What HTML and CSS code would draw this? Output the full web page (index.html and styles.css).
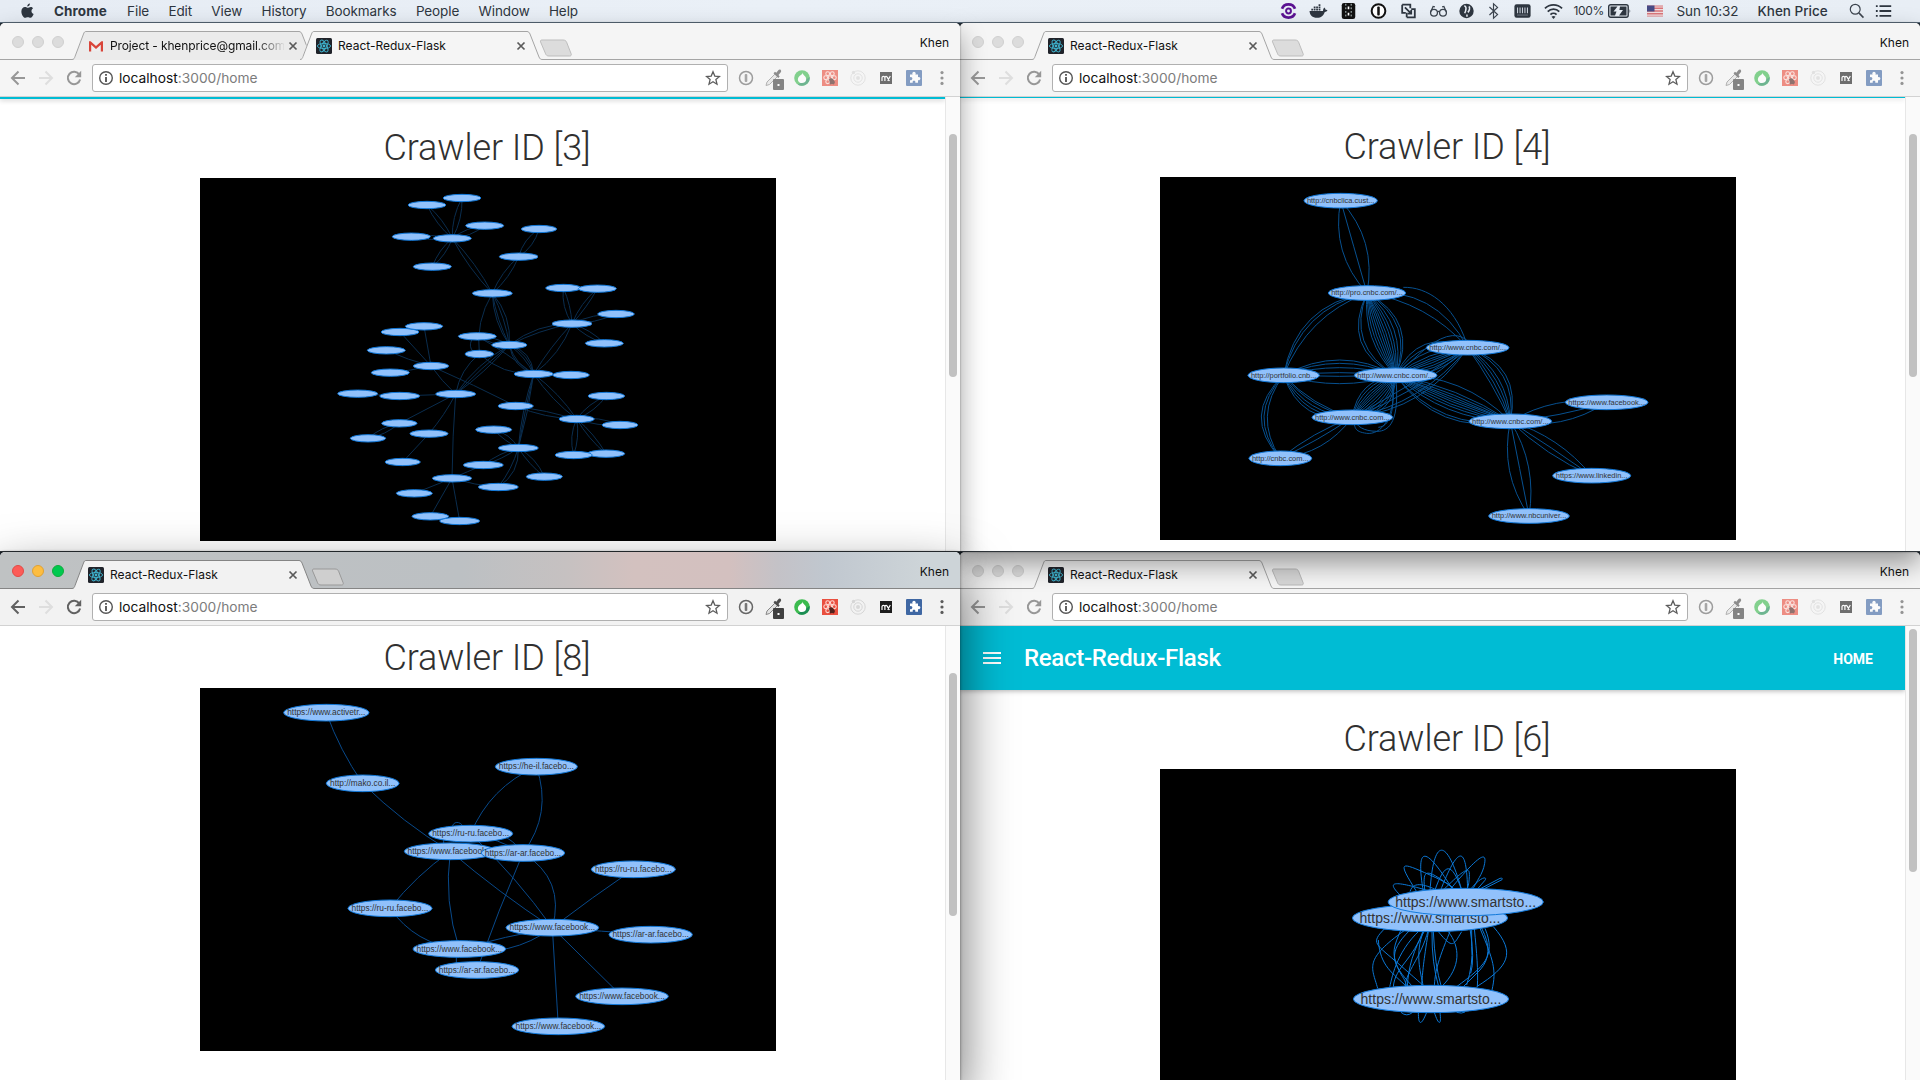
FILE: index.html
```html
<!DOCTYPE html>
<html lang="en">
<head>
<meta charset="utf-8">
<title>React-Redux-Flask</title>
<link rel="stylesheet" href="styles.css">
</head>
<body>
<svg class="sprite" aria-hidden="true">
  <symbol id="react" viewBox="0 0 16 16"><rect width="16" height="16" rx="1.5" fill="#20232a"/><g fill="none" stroke="#3fb4cf" stroke-width=".9"><ellipse cx="8" cy="8" rx="6.6" ry="2.6"/><ellipse cx="8" cy="8" rx="6.6" ry="2.6" transform="rotate(60 8 8)"/><ellipse cx="8" cy="8" rx="6.6" ry="2.6" transform="rotate(120 8 8)"/></g><circle cx="8" cy="8" r="1.4" fill="#3fb4cf"/></symbol>
  <symbol id="gmail" viewBox="0 0 16 16"><path d="M2 3h12v10H2z" fill="#eee"/><path d="M1 13.5V3.2h1.6L8 8l5.400-4.800H15v10.300h-2.200V6.800L8 10.900 3.200 6.800v6.700z" fill="#d9453a"/></symbol>
  <symbol id="close" viewBox="0 0 10 10"><path d="M1.500 1.500l7 7M8.500 1.500l-7 7" stroke="#5a5a5a" stroke-width="1.700"/></symbol>
  <symbol id="back" viewBox="0 0 16 16"><path d="M15 8H2M8.500 1.500L2 8l6.500 6.500" fill="none" stroke="currentColor" stroke-width="2"/></symbol>
  <symbol id="forward" viewBox="0 0 16 16"><path d="M1 8h13M7.500 1.500L14 8l-6.500 6.500" fill="none" stroke="currentColor" stroke-width="2"/></symbol>
  <symbol id="reload" viewBox="0 0 16 16"><path d="M13.300 4.600A6.200 6.200 0 1 0 14.100 9.500" fill="none" stroke="currentColor" stroke-width="2"/><path d="M15.200.8v6.400H8.800z" fill="currentColor"/></symbol>
  <symbol id="info" viewBox="0 0 16 16"><circle cx="8" cy="8" r="6.300" fill="none" stroke="#555" stroke-width="1.400"/><path d="M8 7v5M8 4v1.700" stroke="#444" stroke-width="1.700"/></symbol>
  <symbol id="star" viewBox="0 0 16 16"><path d="M8 1.800l1.800 4.300 4.700.4-3.600 3.100 1.100 4.600L8 11.800l-4 2.400 1.100-4.600L1.500 6.500l4.700-.4z" fill="none" stroke="#5c5c5c" stroke-width="1.300"/></symbol>
  <symbol id="onepass" viewBox="0 0 16 16"><circle cx="8" cy="8" r="6.500" fill="none" stroke="#666" stroke-width="1.500"/><rect x="6.700" y="4" width="2.600" height="8" rx="1" fill="#777"/></symbol>
  <symbol id="dropper" viewBox="0 0 20 23"><path d="M2 18.500l1-3.500 8-8 2.500 2.500-8 8z" fill="#e2e2e2" stroke="#888" stroke-width="1"/><path d="M9.500 6.200L11 4.700l1.300 1.100 2-2.600c1.500-2 4 .2 2.300 2.200L14.500 8l1.200 1.500-1.500 1.400z" fill="#4d4d4d"/><rect x="9" y="12" width="11" height="11" rx="1" fill="#404040"/><rect x="13.500" y="17" width="2" height="2" fill="#fff"/></symbol>
  <symbol id="flame" viewBox="0 0 16 16"><circle cx="8" cy="8" r="7.800" fill="#3cbb4f"/><path d="M15.600 7a7.800 7.800 0 0 1-12 7.400l5-2.400z" fill="#1c8d55"/><path d="M9 2.400c-.7 1.700.9 2.600 2.200 4 1.700 2 1.400 6.400-3.200 6.600-3.800.1-5-3.400-3.500-5.800C5.600 5.400 8.300 4.600 9 2.400z" fill="#fff"/></symbol>
  <symbol id="reactext" viewBox="0 0 16 16"><rect width="16" height="16" fill="#e94f3f"/><g fill="none" stroke="#ffd9d3" stroke-width="1.100"><circle cx="5.700" cy="3.700" r="1.900"/><circle cx="10.300" cy="3.700" r="1.900"/><circle cx="3.700" cy="7.700" r="1.900"/><circle cx="12.300" cy="7.700" r="1.900"/><circle cx="5.700" cy="11.700" r="1.900"/><circle cx="8" cy="7.500" r="1.700"/></g><path d="M7 9l2-1 2 1 2 3-1 2.500-2-.5-2 .5z" fill="#51231d"/></symbol>
  <symbol id="orbit" viewBox="0 0 16 16"><g fill="none" stroke="#d6d6d6"><circle cx="8" cy="8" r="7.200"/><circle cx="8" cy="8" r="4.200"/></g><circle cx="8" cy="8" r="2" fill="#d8d8d8"/><circle cx="3.500" cy="2.500" r="1.700" fill="#d6d6d6"/></symbol>
  <symbol id="nx" viewBox="0 0 16 16"><rect x="2" y="2" width="12" height="12" fill="#1d1d1d"/><path d="M4 11V7.800c0-1.900 2.900-1.900 2.900 0V11M6.900 7.600c.2-1.700 2-1.700 2.400-.2L11.400 11M12.300 6L9.700 10.800" fill="none" stroke="#fff" stroke-width="1.200"/></symbol>
  <symbol id="puzzle" viewBox="0 0 16 16"><rect width="16" height="16" rx="1" fill="#3f67a3"/><path d="M4 4.600h2.600a1.700 1.700 0 1 1 2.800 0H12V7.200a1.600 1.600 0 1 1 0 2.800v2.700H9.200a1.400 1.400 0 1 0-2.400 0H4V10a1.600 1.600 0 1 0 0-2.800z" fill="#fff"/></symbol>
  <symbol id="dots" viewBox="0 0 16 16"><g fill="#5a5a5a"><circle cx="8" cy="2.600" r="1.600"/><circle cx="8" cy="8" r="1.600"/><circle cx="8" cy="13.400" r="1.600"/></g></symbol>
  <symbol id="extensions" viewBox="0 0 212 24">
    <use href="#onepass" x="0" y="4" width="16" height="16"/>
    <use href="#dropper" x="26" y="1" width="20" height="23"/>
    <use href="#flame" x="56" y="4" width="16" height="16"/>
    <use href="#reactext" x="84" y="4" width="16" height="16"/>
    <use href="#orbit" x="112" y="4" width="16" height="16"/>
    <use href="#nx" x="140" y="4" width="16" height="16"/>
    <use href="#puzzle" x="168" y="4" width="16" height="16"/>
    <use href="#dots" x="196" y="4" width="16" height="16"/>
  </symbol>
  <symbol id="tab" viewBox="0 0 243 29"><path d="M0 28.500C2 28.500 2.500 27 3 25.500L11.500 3C12.200 1 12.800.5 14 .5H227C228.500.5 229.300 1.500 230 3L239 26C240 28 240.500 28.500 243 28.500V29H0Z" fill="var(--tab)"/><path d="M0 28.500C2 28.500 2.500 27 3 25.500L11.500 3C12.200 1 12.800.5 14 .5H227C228.500.5 229.300 1.500 230 3L239 26C240 28 240.500 28.500 243 28.500" fill="none" stroke="var(--line)"/></symbol>
  <symbol id="newtab" viewBox="0 0 34 18"><path d="M3 1H24c2 0 3 .8 3.600 2.200l4.500 11.500c.5 1.400 0 2.300-1.500 2.300H10c-2 0-2.800-.8-3.400-2.200L1.600 3C1.200 1.800 1.500 1 3 1z" fill="var(--newtab)" stroke="var(--newline)"/></symbol>
</svg>

<header class="menubar">
  <svg class="apple" viewBox="0 0 14 17"><path d="M9.600.3c.1 1.700-1.300 3.300-2.900 3.300C6.500 2 8 .5 9.600.3zM12.900 5.700c-2.400 1.500-2 4.800.7 5.900-.6 1.800-2 4.200-3.400 4.200-1.100 0-1.600-.7-2.900-.7s-1.900.7-2.900.7C2.500 15.800.4 12 .4 9 .4 6 2.300 4.300 4.200 4.300c1.200 0 2.200.8 3 .8s1.900-.9 3.400-.9c.9 0 1.800.5 2.300 1.500z"/></svg>
  <nav class="menus"><b>Chrome</b><span>File</span><span>Edit</span><span>View</span><span>History</span><span>Bookmarks</span><span>People</span><span>Window</span><span>Help</span></nav>
  <div class="status">
    <svg viewBox="0 0 20 20"><g fill="none" stroke="#5b1292" stroke-width="3"><path d="M2.800 7.500a7.600 7 0 0 1 14.400 0M2.800 12.500a7.600 7 0 0 0 14.400 0"/></g><circle cx="10" cy="10" r="2.700" fill="none" stroke="#5b1292" stroke-width="2.200"/></svg>
    <svg viewBox="0 0 20 20"><path d="M0 10h15c0-2 .5-3 1.500-4 1 1 1.300 1.700 1.300 2.600L20 9c-.5 1.500-1.500 2-3 2-1.500 4-4 6.500-8.500 6.500C3 17.500.5 15 0 10z"/><path d="M2 7.500h2v2H2zM4.700 7.500h2v2h-2zM7.400 7.500h2v2h-2zM10.100 7.500h2v2h-2zM4.700 5h2v2h-2zM7.400 5h2v2h-2zM10.100 5h2v2h-2zM10.100 2.500h2v2h-2z"/></svg>
    <svg viewBox="0 0 20 20"><rect x="2.500" y="1" width="15" height="18" rx="2.500" fill="#111"/><path d="M7 2v16M13 2v16" stroke="#cdd" stroke-width="1" stroke-dasharray="2 2"/><path d="M10 5v10" stroke="#fff" stroke-width="1.800" stroke-dasharray="3 4"/></svg>
    <svg viewBox="0 0 20 20"><circle cx="10" cy="10" r="7.600" fill="#fff" stroke="#111" stroke-width="2.200"/><rect x="8.600" y="5" width="2.800" height="10" rx="1" fill="#111"/></svg>
    <svg viewBox="0 0 20 20"><g fill="none" stroke="#2e3640" stroke-width="2"><path d="M3 3h9v4M3 3v9h4"/><path d="M8 17h9V8h-4M8 17v-5"/><path d="M6 6l7 7M13 9v4H9"/></g></svg>
    <svg viewBox="0 0 20 20"><g fill="none" stroke="#3c444e" stroke-width="1.400"><circle cx="5" cy="12" r="3.800"/><circle cx="15" cy="12" r="3.800"/><path d="M8.600 11q1.400-1.200 2.800 0M1.300 11L4 5l2 .5M18.700 11L16 5l-2 .5"/></g></svg>
    <svg viewBox="0 0 20 20"><circle cx="10" cy="10" r="8"/><path d="M7.500 4.500c3 0 2 5 .5 8M12.500 5c2 1 .5 5-1 6.500M10.500 14v2.500" stroke="#e9eef5" stroke-width="1.700" fill="none"/></svg>
    <svg viewBox="0 0 20 20"><path d="M5.500 5.500l9 8.500-4.500 4V2l4.500 4-9 8.500" fill="none" stroke="#3c444e" stroke-width="1.300"/></svg>
    <svg viewBox="0 0 20 20"><rect x="1" y="2.500" width="18" height="15" rx="2.500"/><path d="M4.500 6v6.500M7.300 6v6.500M10 6v6.500M12.700 6v6.500M15.500 6v6.500" stroke="#c9d0da" stroke-width="1.200"/><path d="M4 14.500h12" stroke="#8c949e" stroke-width=".8"/></svg>
    <svg viewBox="0 0 20 20"><g fill="none" stroke="#2e3640" stroke-width="2"><path d="M.5 7a13.500 13.500 0 0 1 19 0M3.600 10.700a9 9 0 0 1 12.800 0M6.600 14a5 5 0 0 1 6.800 0"/></g><path d="M10 19l-2.200-2.500a3.200 3.200 0 0 1 4.400 0z"/></svg>
    <span class="percent">100%</span>
    <svg viewBox="0 0 24 14"><rect x=".7" y=".7" width="19.500" height="12.600" rx="2" fill="none" stroke="#2e3640" stroke-width="1.400"/><path d="M2.500 2.500h7l-4 5h3l-1.500 4h-4.500zM12 2.500h6.500v9H11l4-5.500h-3.600z"/><path d="M21.600 5v4.500q1.500-2 0-4.500z"/></svg>
    <svg class="flag" viewBox="0 0 16 11"><path fill="#d9767a" d="M0 0h16v11H0z"/><path d="M0 1.500h16M0 4.200h16M0 6.900h16M0 9.600h16" stroke="#f1dddf" stroke-width="1.200"/><path fill="#474b86" d="M0 0h7.500v6H0z"/></svg>
    <span class="clock">Sun 10:32</span>
    <span class="user">Khen Price</span>
    <svg viewBox="0 0 20 20"><circle cx="8.500" cy="8.500" r="5.800" fill="none" stroke="#3c444e" stroke-width="1.400"/><path d="M12.800 12.800l5.400 5.600" stroke="#3c444e" stroke-width="1.800"/></svg>
    <svg viewBox="0 0 20 20"><path d="M5 4.500h13M5 10h13M5 15.500h13" stroke="#2e3640" stroke-width="2"/><path d="M1 4.500h2M1 10h2M1 15.500h2" stroke="#2e3640" stroke-width="2"/></svg>
  </div>
</header>

<main class="desktop">
  <section class="window w1">
    <div class="titlebar">
      <div class="lights"><i></i><i></i><i></i></div>
      <div class="tabs">
        <div class="tab inactive"><svg class="shape"><use href="#tab"/></svg><svg class="favicon"><use href="#gmail"/></svg><span class="label fade">Project - khenprice@gmail.com</span><svg class="close"><use href="#close"/></svg></div>
        <div class="tab"><svg class="shape"><use href="#tab"/></svg><svg class="favicon"><use href="#react"/></svg><span class="label">React-Redux-Flask</span><svg class="close"><use href="#close"/></svg></div>
        <svg class="newtab"><use href="#newtab"/></svg>
      </div>
      <span class="profile">Khen</span>
    </div>
    <div class="toolbar"><svg class="nav"><use href="#back"/></svg><svg class="nav off"><use href="#forward"/></svg><svg class="nav"><use href="#reload"/></svg>
      <div class="omnibox"><svg><use href="#info"/></svg><span class="url">localhost<em>:3000/home</em></span><svg><use href="#star"/></svg></div>
      <svg class="extensions"><use href="#extensions"/></svg></div>
    <div class="viewport">
      <article class="page"><div class="appbar strip"></div><h1>Crawler ID [3]</h1><svg class="graph" id="graph3" viewBox="-360 24 1728 1089"></svg></article>
      <div class="scrollbar"><div class="thumb"></div></div>
    </div>
  </section>

  <section class="window w2">
    <div class="titlebar">
      <div class="lights"><i></i><i></i><i></i></div>
      <div class="tabs">
        <div class="tab"><svg class="shape"><use href="#tab"/></svg><svg class="favicon"><use href="#react"/></svg><span class="label">React-Redux-Flask</span><svg class="close"><use href="#close"/></svg></div>
        <svg class="newtab"><use href="#newtab"/></svg>
      </div>
      <span class="profile">Khen</span>
    </div>
    <div class="toolbar"><svg class="nav"><use href="#back"/></svg><svg class="nav off"><use href="#forward"/></svg><svg class="nav"><use href="#reload"/></svg>
      <div class="omnibox"><svg><use href="#info"/></svg><span class="url">localhost<em>:3000/home</em></span><svg><use href="#star"/></svg></div>
      <svg class="extensions"><use href="#extensions"/></svg></div>
    <div class="viewport">
      <article class="page"><div class="appbar strip thin"></div><h1>Crawler ID [4]</h1><svg class="graph" id="graph4" viewBox="-180 21 1728 1089"></svg></article>
      <div class="scrollbar"><div class="thumb"></div></div>
    </div>
  </section>

  <section class="window active w3">
    <div class="titlebar">
      <div class="lights"><i></i><i></i><i></i></div>
      <div class="tabs">
        <div class="tab"><svg class="shape"><use href="#tab"/></svg><svg class="favicon"><use href="#react"/></svg><span class="label">React-Redux-Flask</span><svg class="close"><use href="#close"/></svg></div>
        <svg class="newtab"><use href="#newtab"/></svg>
      </div>
      <span class="profile">Khen</span>
    </div>
    <div class="toolbar"><svg class="nav"><use href="#back"/></svg><svg class="nav off"><use href="#forward"/></svg><svg class="nav"><use href="#reload"/></svg>
      <div class="omnibox"><svg><use href="#info"/></svg><span class="url">localhost<em>:3000/home</em></span><svg><use href="#star"/></svg></div>
      <svg class="extensions"><use href="#extensions"/></svg></div>
    <div class="viewport">
      <article class="page"><h1>Crawler ID [8]</h1><svg class="graph" id="graph8" viewBox="-210 24 1728 1089"></svg></article>
      <div class="scrollbar"><div class="thumb"></div></div>
    </div>
  </section>

  <section class="window w4">
    <div class="titlebar">
      <div class="lights"><i></i><i></i><i></i></div>
      <div class="tabs">
        <div class="tab"><svg class="shape"><use href="#tab"/></svg><svg class="favicon"><use href="#react"/></svg><span class="label">React-Redux-Flask</span><svg class="close"><use href="#close"/></svg></div>
        <svg class="newtab"><use href="#newtab"/></svg>
      </div>
      <span class="profile">Khen</span>
    </div>
    <div class="toolbar"><svg class="nav"><use href="#back"/></svg><svg class="nav off"><use href="#forward"/></svg><svg class="nav"><use href="#reload"/></svg>
      <div class="omnibox"><svg><use href="#info"/></svg><span class="url">localhost<em>:3000/home</em></span><svg><use href="#star"/></svg></div>
      <svg class="extensions"><use href="#extensions"/></svg></div>
    <div class="viewport">
      <article class="page">
        <div class="appbar"><svg class="burger" viewBox="0 0 18 12"><path d="M0 1h18M0 6h18M0 11h18" stroke="#fff" stroke-width="2"/></svg><span class="brand">React-Redux-Flask</span><a class="home">HOME</a></div>
        <h1>Crawler ID [6]</h1><svg class="graph" id="graph6" viewBox="-480 -153 1728 1089"></svg></article>
      <div class="scrollbar"><div class="thumb"></div></div>
    </div>
  </section>
</main>
<script src="graphs.js"></script>
</body>
</html>
```
FILE: styles.css
```css
* { box-sizing: border-box; }
body { margin: 0; width: 1920px; height: 1080px; overflow: hidden; background: #27313b; font-family: Inter, "Liberation Sans", sans-serif; }
svg { display: block; flex: none; }
.sprite { position: absolute; width: 0; height: 0; }

.menubar { height: 23px; display: flex; align-items: center; padding: 0 22px 1px 21px; background: linear-gradient(90deg, #e6ecf4, #eaf0f7 40%, #e8eef5); border-bottom: 1px solid #5e6f7e; color: #2e3640; fill: #2e3640; font-size: 13.500px; }
.apple { width: 13px; height: 16px; margin-right: 20px; }
.menus { display: flex; gap: 19.300px; white-space: nowrap; letter-spacing: -.1px; }
.menus b { font-weight: 700; letter-spacing: .1px; margin-right: 1px; }
.status { margin-left: auto; display: grid; grid-template-columns: 30px 30px 30px 30px 30px 28px 27px 29px 31px 36px 34px 39px 30px 81px 85.500px 31px 24px; align-items: center; white-space: nowrap; }
.status svg { width: 19px; height: 18px; margin-left: 6px; }
.status svg:nth-child(12) { width: 24px; height: 14px; margin-left: 0; }
.status svg.flag { width: 16px; height: 12px; margin-left: 0; }
.status svg:nth-child(16) { margin-left: 5px; width: 17px; height: 17px; }
.status svg:nth-child(17) { margin-left: 0; width: 20px; }
.percent { font-size: 12px; letter-spacing: -.3px; }
.clock { letter-spacing: -.1px; }
.user { letter-spacing: 0; font-weight: 500; }

.desktop { display: grid; grid-template-columns: 960px 960px; grid-template-rows: 529px 529px; }
.window { --tab: #f5f5f5; --line: #a5a5a5; --newtab: #dcdcdc; --newline: #bdbdbd; position: relative; display: flex; flex-direction: column; background: #fff; border-bottom: 1px solid #30363b; border-radius: 5px 5px 0 0; box-shadow: 0 12px 26px rgba(0,0,0,.38), 0 0 2px rgba(0,0,0,.45); }
.w1 { z-index: 3; }
.w2 { z-index: 2; }
.w3 { z-index: 4; }
.w4 { z-index: 1; }
.w4 .lights, .w4 .newtab { --newtab: #d6d6d6; --newline: #b8b8b8; }
.active { --tab: #f2f2f2; --line: #858585; --newtab: #cfcfcf; --newline: #999; box-shadow: 0 22px 52px rgba(0,0,0,.6), 0 0 3px rgba(0,0,0,.5); }
.titlebar { height: 37px; display: flex; padding: 8px 11px 0 12px; background: linear-gradient(#a5a5a5, #a5a5a5) bottom / 100% 1px no-repeat, #f5f5f5; border-radius: 5px 5px 0 0; }
.active .titlebar { background: linear-gradient(#858585, #858585) bottom / 100% 1px no-repeat, linear-gradient(90deg, #bfc2c3 0, #bcc0c3 48%, #c6c1c1 59%, #d3c1bf 66%, #d3c0bf 76%, #c4c2c7 81%, #c0c7cf 86%, #cdd4d8 96%); }
.lights { display: flex; gap: 8px; margin-top: 5px; width: 60px; }
.lights i { width: 12px; height: 12px; border-radius: 50%; background: #dcdcdc; border: 1px solid #d0d0d0; }
.active .lights i { background: #fc5b57; border-color: #e24a45; }
.active .lights i:nth-child(2) { background: #fdbd40; border-color: #e0a133; }
.active .lights i:nth-child(3) { background: #00c94f; border-color: #10ac3b; }
.tabs { display: flex; }
.tab { position: relative; width: 243px; height: 29px; margin-right: -15px; display: flex; align-items: center; padding: 0 17px 0 16px; }
.tab.inactive { --tab: #ebebeb; }
.tab.inactive .shape { clip-path: polygon(0 0, 231px 0, 235px 13px, 229px 29px, 0 29px); }
.tab .shape { position: absolute; left: 0; top: 0; width: 243px; height: 29px; }
.favicon { position: relative; width: 16px; height: 16px; }
.label { position: relative; margin-left: 6px; width: 174px; font-size: 12px; letter-spacing: 0; color: #111; white-space: nowrap; }
.fade { letter-spacing: -.12px; -webkit-mask: linear-gradient(90deg, #000 84%, transparent 101%); mask: linear-gradient(90deg, #000 84%, transparent 101%); }
.close { position: relative; width: 10px; height: 10px; margin-left: 4px; }
.newtab { position: relative; width: 34px; height: 18px; margin: 8px 0 0 11px; }
.profile { margin: 4px 0 0 auto; font-size: 12px; line-height: 16px; color: #111; }

.toolbar { height: 37px; display: flex; align-items: center; padding: 0 10px; background: #f5f5f5; border-bottom: 1px solid #d2d2d2; color: #979797; }
.active .toolbar { background: #f2f2f2; color: #616161; }
.nav { width: 16px; height: 16px; margin-right: 12px; }
.nav.off { color: #dedede; }
.omnibox { width: 636px; height: 28px; margin-left: -2px; display: flex; align-items: center; gap: 5px; padding: 0 6px 0 5px; background: #fff; border: 1px solid #b0b0b0; border-radius: 3px; }
.omnibox svg { width: 16px; height: 16px; }
.url { flex: 1; font-size: 13.750px; line-height: 20px; color: #111; }
.url em { font-style: normal; color: #7c7c7c; }
.extensions { width: 212px; height: 24px; margin-left: 10px; opacity: .62; }
.active .extensions { opacity: 1; }

.viewport { flex: 1; min-height: 0; display: flex; overflow: hidden; }
.page { width: 945px; overflow: hidden; }
.appbar { position: relative; height: 64px; display: flex; align-items: center; padding: 0 32px 0 23px; background: #00bcd4; color: #fff; font-family: Roboto, sans-serif; box-shadow: 0 1px 5px rgba(0,0,0,.3); }
.strip { height: 2px; padding: 0; }
.thin { height: 1px; }
.burger { width: 18px; height: 12px; }
.brand { margin-left: 23px; font-size: 24px; font-weight: 500; letter-spacing: -.3px; }
.home { margin-left: auto; font-size: 14px; font-weight: 700; padding-top: 2px; }
h1 { margin: 27px 0 0 199px; width: 576px; height: 52px; font: 300 36px/44px Roboto, sans-serif; letter-spacing: -.06px; text-align: center; color: #303030; }
.w3 h1 { margin-top: 10px; }
.graph { margin-left: 200px; width: 576px; height: 363px; background: #000; }
.graph path { fill: none; stroke-width: 3; }
.graph ellipse { fill: #91c1fb; stroke: #1279da; stroke-width: 3; }
.graph text { fill: #333; font-family: "Liberation Sans", Arial, sans-serif; text-anchor: middle; }
#graph3 path { stroke: #0a2d4e; }
#graph4 path { stroke: #07508f; }
#graph8 path { stroke: #08498a; }
#graph6 path { stroke: #0b78d6; }
#graph4 text { font-size: 22.400px; }
#graph8 text { font-size: 25px; }
#graph6 text { font-size: 42px; }
.scrollbar { width: 15px; background: #fafafa; border-left: 1px solid #e7e7e7; padding: 37px 3px 0; }
.thumb { width: 8px; height: 243px; border-radius: 4px; background: #c1c1c1; }
.w3 .scrollbar { padding-top: 47px; }
.w4 .scrollbar { padding-top: 3px; }
```
FILE: graphs.js
```js
const NS = "http://www.w3.org/2000/svg";

function add(svg, name, attrs, text) {
  const el = document.createElementNS(NS, name);
  for (const key in attrs) el.setAttribute(key, attrs[key]);
  if (text) el.textContent = text;
  svg.appendChild(el);
}

// nodes: [x, y, rx, label]; edges: [from, to, ...bends]; extra: path strings
function draw(id, ry, nodes, edges, extra = []) {
  const svg = document.getElementById(id);
  for (const [a, b, ...bends] of edges) {
    const [x1, y1] = nodes[a], [x2, y2] = nodes[b];
    const len = Math.hypot(x2 - x1, y2 - y1);
    for (const bend of bends) {
      const cx = (x1 + x2) / 2 - (y2 - y1) / len * bend;
      const cy = (y1 + y2) / 2 + (x2 - x1) / len * bend;
      add(svg, "path", { d: `M${x1} ${y1}Q${cx} ${cy} ${x2} ${y2}` });
    }
  }
  extra.forEach(d => add(svg, "path", { d }));
  for (const [x, y, rx, label] of nodes) {
    add(svg, "ellipse", { cx: x, cy: y, rx, ry });
    if (label) add(svg, "text", { x, y: y + ry * 0.33 }, label);
  }
}

draw("graph3", 11, [
  [321,105,57],[426,84,57],[494,167,57],[274,200,57],[397,205,57],[337,290,57],[657,177,53],[596,260,58],[517,370,60],[730,354,53],
  [832,356,57],[756,461,60],[888,432,55],[853,520,57],[472,499,57],[568,525,53],[478,552,43],[641,612,59],[753,615,55],[240,486,57],
  [312,469,56],[199,541,57],[211,608,57],[333,588,53],[113,671,60],[239,678,60],[407,672,60],[587,708,53],[859,678,55],[770,747,53],
  [900,765,54],[858,851,56],[761,855,56],[521,779,54],[595,834,60],[490,885,60],[673,920,54],[535,951,60],[238,760,53],[144,805,53],
  [327,791,57],[248,876,53],[396,925,59],[283,970,54],[331,1039,55],[419,1053,60]
], [
  [0,4,14,-14],[1,4,17,-17],[2,4,16,-16],[3,4,12,-12],[4,5,14,-14],[6,7,20,-20],[7,8,16,-16],[4,8,14,-14],
  [8,15,24,12,-14,-34],[8,16,32],[9,11,20,-10],[10,11,16,-8],[11,12,-16,14],[11,13,-14,14],[11,15,14,34],[11,17,10,-28],
  [14,15,-14,14],[14,17,-8],[16,17,35],[15,17,34,24,-14,-28,-40],[15,26,24,6,-12],[16,26,26],[17,18,0],
  [19,23,0],[20,23,0],[21,23,6],[22,23,4],[23,26,6],[23,27,-4],[25,26,0],[24,25,0],[26,38,0],[26,40,-8],[26,42,4],
  [38,39,14,-14],[40,41,0],[27,29,18,-6],[17,29,16,-16],[17,34,4,14,-8],[29,28,-16,16],[29,30,-18,14],[29,31,-12,12],[29,32,20,-14],
  [33,34,-20,8],[34,35,12,-10],[34,36,10,-20],[34,37,-12,-38],[35,42,0],[42,37,8],[42,43,0],[42,44,0],[42,45,0]
], ["M455 510Q445 530 460 545"]);

draw("graph4", 22, [
  [362,92,110,"http://cnbclica.cust..."],[441,369,116,"http://pro.cnbc.com/..."],[743,533,124,"http://www.cnbc.com/..."],
  [191,616,107,"http://portfolio.cnb..."],[527,616,124,"http://www.cnbc.com/..."],[397,742,121,"http://www.cnbc.com..."],
  [181,865,94,"http://cnbc.com..."],[871,754,124,"http://www.cnbc.com/..."],[1160,697,124,"https://www.facebook..."],
  [1115,917,117,"https://www.linkedin..."],[927,1038,121,"http://www.nbcuniver..."]
], [
  [0,1,72,0,-72],[1,4,130,112,60,44,30,15,0,-14,-28,-44,-60,-80,-105,-120],[1,2,-115,-62],[1,3,125,108,78],
  [3,4,-92,-72,-46,-16,6,50],[4,5,-90,-75,-60,-45,-30,-15,0,12,24,38,54,70],[4,2,-110,-85,-60,-35,-18,-6,8,24,38,55],
  [4,7,120,105,70,50,36,20,8,-6,-20,-38,-80],[2,7,-115,-98,-66,-48,-30,-12],[2,5,-95,-75,-40,-10],
  [3,5,100,82,64,44,34],[3,6,124,108,88],[5,6,20,-10,-55],[7,8,-52,16,60],[7,9,26,-4,-44],[7,10,62,0,-54]
], ["M527 620C540 750 510 785 470 784S410 770 400 745", "M520 620C530 750 480 795 440 790S405 770 400 745", "M510 620C530 700 515 770 475 772",
    "M740 510Q690 470 600 550L527 616", "M550 352C620 350 700 400 740 520"]);

draw("graph8", 25, [
  [169,98,128,"https://www.activetr..."],[278,310,109,"http://mako.co.il..."],[799,260,123,"https://he-il.facebo..."],
  [602,461,126,"https://ru-ru.facebo..."],[541,514,138,"https://www.facebook..."],[759,519,125,"https://ar-ar.facebo..."],
  [1090,568,126,"https://ru-ru.facebo..."],[360,685,126,"https://ru-ru.facebo..."],[847,743,139,"https://www.facebook..."],
  [1142,764,125,"https://ar-ar.facebo..."],[568,807,139,"https://www.facebook..."],[621,870,125,"https://ar-ar.facebo..."],
  [1056,949,139,"https://www.facebook..."],[865,1039,139,"https://www.facebook..."]
], [
  [0,1,16],[1,4,20],[2,3,56],[2,5,-70],[4,7,18],[7,10,54],[4,10,34],[4,8,12],[3,8,-18],[5,8,-90],[5,11,6],
  [8,6,-4],[8,9,0],[8,10,-62,6],[8,12,0],[8,13,0],[3,5,-56,-14]
], ["M546 445C548 420 572 425 578 438", "M559 830V850", "M521 480V492"]);

draw("graph6", 41, [
  [330,294,233,"https://www.smartsto..."],[437,246,233,"https://www.smartsto..."],[333,537,233,"https://www.smartsto..."]
], [], [
  "M330 215C340 50 380 50 425 210", "M310 215C285 65 320 80 405 220", "M290 215C230 120 240 125 330 165S400 210 410 225",
  "M240 225C205 190 210 180 300 205S380 225 400 235", "M360 215C415 75 440 70 443 215", "M385 215C480 100 500 95 494 130S470 180 455 215",
  "M485 210L546 179Q550 173 540 175L470 212", "M315 215C305 140 320 145 400 205", "M345 210C375 125 395 125 425 210",
  "M370 210C440 140 450 140 448 170S445 195 440 210", "M450 210C485 165 505 170 494 182L468 212", "M270 215C280 180 320 195 360 215",
  "M195 325C150 370 165 370 240 435S300 490 330 510", "M255 330C130 420 155 440 173 505", "M245 325C220 380 215 400 232 440S255 470 262 510",
  "M300 330C225 400 215 480 208 505", "M270 330C200 400 215 430 275 497", "M175 360C180 440 220 460 260 500",
  "M310 330C280 420 225 440 220 500", "M325 330C300 420 260 450 255 500", "M315 330C280 390 265 440 262 500",
  "M310 335C285 400 300 450 310 500", "M325 335C310 430 308 450 305 500", "M340 335Q345 440 364 500", "M336 335Q335 430 356 500",
  "M355 335C400 390 400 375 425 335", "M385 335C420 380 425 440 365 500", "M390 335C350 430 345 460 343 500",
  "M455 325V380Q460 430 440 495", "M450 325Q465 420 452 460", "M463 325C470 400 475 450 472 500", "M480 325C520 420 530 450 516 510",
  "M520 320C590 400 565 440 470 500", "M495 325C530 410 490 440 410 500", "M485 325Q525 400 480 450L430 500",
  "M243 577Q260 592 278 577", "M295 577C295 615 303 620 320 577", "M343 577C355 615 365 620 360 577", "M410 577Q425 582 435 576"
]);
```
